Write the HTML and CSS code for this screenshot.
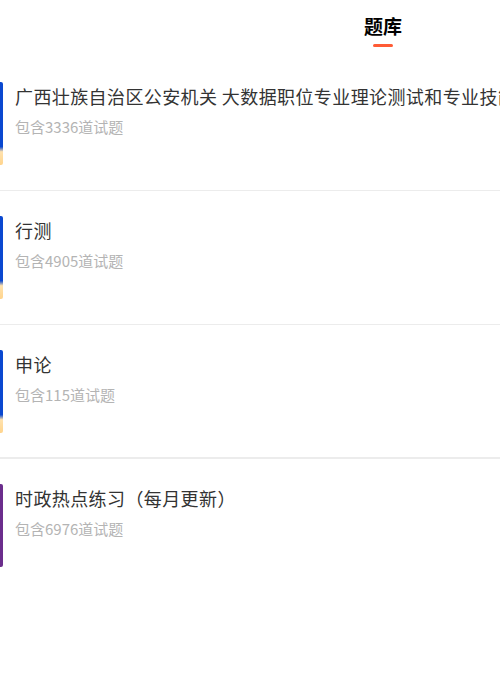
FILE: index.html
```
<!DOCTYPE html>
<html lang="zh-CN">
<head>
    <meta charset="UTF-8">
    <meta name="viewport" content="width=device-width, initial-scale=1.0">
    <title>题库</title>
    <link rel="stylesheet" href="styles.css">
</head>
<body>
    <div class="page">
        <div class="header">
            <div class="tab active">题库</div>
        </div>

        <div class="list">
            <div class="item">
                <div class="mark blue"></div>
                <div class="info">
                    <div class="name">广西壮族自治区公安机关 大数据职位专业理论测试和专业技能测试题库</div>
                    <div class="count">包含3336道试题</div>
                </div>
            </div>
            <div class="item">
                <div class="mark blue"></div>
                <div class="info">
                    <div class="name">行测</div>
                    <div class="count">包含4905道试题</div>
                </div>
            </div>
            <div class="item thick">
                <div class="mark blue"></div>
                <div class="info">
                    <div class="name">申论</div>
                    <div class="count">包含115道试题</div>
                </div>
            </div>
            <div class="item">
                <div class="mark purple"></div>
                <div class="info">
                    <div class="name">时政热点练习（每月更新）</div>
                    <div class="count">包含6976道试题</div>
                </div>
            </div>
        </div>
    </div>
</body>
</html>
```

FILE: styles.css
```
html, body {
    margin: 0;
    padding: 0;
    background: #fff;
    overflow: hidden;
}
body {
    font-family: "Noto Sans CJK SC", "Noto Sans", sans-serif;
    color: #333;
}
.page {
    width: 766px;
}
.header {
    height: 57px;
    display: flex;
    justify-content: center;
}
.tab {
    font-size: 19px;
    font-weight: bold;
    color: #000;
    line-height: 24px;
    padding-top: 14px;
    display: flex;
    flex-direction: column;
    align-items: center;
}
.tab.active::after {
    content: "";
    width: 20px;
    height: 3px;
    border-radius: 2px;
    background: #ff5b35;
    margin-top: 6px;
}
.item {
    display: flex;
    gap: 12px;
    padding: 25px 0;
    border-bottom: 1px solid #ececec;
}
.item.thick {
    padding-bottom: 24px;
    border-bottom-width: 2px;
}
.item:last-child {
    border-bottom: none;
}
.mark {
    width: 3px;
    height: 83px;
    flex-shrink: 0;
    border-radius: 0 2px 2px 0;
}
.mark.blue {
    background: linear-gradient(#0a48d0 0%, #0a48d0 78%, #ffe2ae 84%, #ffd48c 100%);
}
.mark.purple {
    background: #6b2d8c;
}
.info {
    white-space: nowrap;
}
.name {
    font-size: 18px;
    line-height: 28px;
    letter-spacing: 0.4px;
    color: #333;
}
.count {
    font-size: 15px;
    line-height: 22px;
    margin-top: 6px;
    color: #b4b4b4;
}
```
